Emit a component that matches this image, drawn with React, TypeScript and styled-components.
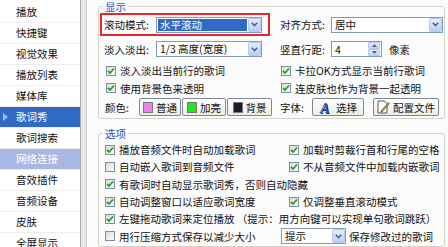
import React from 'react';
import styled, { createGlobalStyle, css } from 'styled-components';

const GlobalStyle = createGlobalStyle`
  html, body {
    margin: 0;
    padding: 0;
    background: #fbfbfb;
  }
  body {
    font-family: "Noto Sans CJK SC", "Noto Sans", sans-serif;
    font-size: 10.5px;
    color: #111;
  }
`;

const Page = styled.div`
  display: flex;
  width: 448px;
  height: 247px;
  overflow: hidden;
  background: #fbfbfb;
`;

const Sidebar = styled.ul`
  margin: 0;
  padding: 2px 0 0;
  list-style: none;
  width: 80px;
  flex: none;
  background: #fff;
  border-right: 1px solid #a9a9a9;
`;

type NavState = 'selected' | 'inactive' | undefined;

const NavItem = styled.li<{ $state?: NavState }>`
  position: relative;
  box-sizing: border-box;
  height: 21px;
  line-height: 20px;
  padding-left: 16px;
  border-bottom: 1px solid #ededed;
  white-space: nowrap;
  ${({ $state }) =>
    $state === 'selected' &&
    css`
      background: #316ac5;
      color: #fff;
      &:before {
        content: '';
        position: absolute;
        left: 3px;
        top: 6px;
        border-left: 5px solid #a9b4f0;
        border-top: 4px solid transparent;
        border-bottom: 4px solid transparent;
      }
    `}
  ${({ $state }) =>
    $state === 'inactive' &&
    css`
      background: #a8b8e2;
      color: #fff;
    `}
`;

const Splitter = styled.div`
  width: 5px;
  flex: none;
  background: #e7e7e7;
  border-right: 1px solid #cacaca;
`;

const Content = styled.div`
  flex: 1;
  min-width: 0;
  padding: 0 3px 0 11px;
`;

const Group = styled.fieldset<{ $gap?: number }>`
  margin: ${({ $gap }) => $gap ?? 0}px 0 0;
  padding: 0 1px 1px;
  border: 1px solid #d3d3c8;
  border-radius: 3px;
  min-width: 0;
`;

const GroupTitle = styled.legend`
  margin-left: 3px;
  padding: 0 2px;
  line-height: 13px;
  color: #2451c2;
`;

const DisplayGrid = styled.div`
  display: grid;
  grid-template-columns: 170px 1fr;
  grid-template-rows: 23px 26px 17px 18px 20px;
  column-gap: 10px;
  align-items: center;
`;

const OptionsGrid = styled.div`
  display: grid;
  grid-template-columns: 171px 1fr;
  grid-auto-rows: 17.3px;
  column-gap: 10px;
  align-items: center;
  padding-top: 1px;
`;

const Field = styled.div<{ $highlight?: boolean; $inset?: number }>`
  display: flex;
  align-items: center;
  box-sizing: border-box;
  min-width: 0;
  white-space: nowrap;
  padding-left: ${({ $inset }) => $inset ?? 0}px;
  ${({ $highlight }) =>
    $highlight &&
    css`
      height: 23px;
      border: 2px solid #e5262b;
      padding-left: 2px;
    `}
`;

const Wide = styled(Field)`
  grid-column: 1 / -1;
`;

const Label = styled.span<{ $w: number }>`
  width: ${({ $w }) => $w}px;
  flex: none;
`;

const SelectBox = styled.div<{ $w?: number }>`
  display: flex;
  align-items: center;
  box-sizing: border-box;
  height: 16px;
  ${({ $w }) => ($w ? `width: ${$w}px; flex: none;` : 'flex: 1;')}
  border: 1px solid #7f9db9;
  background: #fff;
`;

const SelectText = styled.span<{ $active?: boolean }>`
  flex: 1;
  height: 12px;
  line-height: 12px;
  margin: 0 1px;
  padding-left: 2px;
  ${({ $active }) =>
    $active &&
    css`
      background: #316ac5;
      color: #fff;
    `}
`;

const DropButton = styled.span`
  width: 13px;
  height: 14px;
  flex: none;
  box-sizing: border-box;
  display: flex;
  align-items: center;
  justify-content: center;
  border: 1px solid #b7c8f0;
  border-radius: 2px;
  background: linear-gradient(#e6eefc, #b9cdf5);
`;

const Chevron = () => (
  <svg width="7" height="5" viewBox="0 0 7 5">
    <path d="M0.8 0.8 L3.5 3.6 L6.2 0.8" fill="none" stroke="#4d6185" strokeWidth="1.5" />
  </svg>
);

function Select({ value, width, active }: { value: string; width?: number; active?: boolean }) {
  return (
    <SelectBox $w={width}>
      <SelectText $active={active}>{value}</SelectText>
      <DropButton>
        <Chevron />
      </DropButton>
    </SelectBox>
  );
}

const SpinBox = styled.div`
  display: flex;
  align-items: center;
  box-sizing: border-box;
  width: 51px;
  height: 16px;
  border: 1px solid #7f9db9;
  background: #fff;
  padding-left: 3px;
`;

const SpinValue = styled.span`
  flex: 1;
`;

const SpinButtons = styled.span`
  display: flex;
  flex-direction: column;
  width: 12px;
  height: 14px;
  margin-right: 1px;
`;

const SpinPart = styled.span`
  flex: 1;
  display: flex;
  align-items: center;
  justify-content: center;
  border: 1px solid #b7c8f0;
  border-radius: 1px;
  background: linear-gradient(#e6eefc, #c2d3f6);
`;

const Unit = styled.span<{ $gap?: number }>`
  margin-left: ${({ $gap }) => $gap ?? 7}px;
`;

const Check = styled.span`
  width: 10px;
  height: 10px;
  flex: none;
  box-sizing: border-box;
  margin-right: 4px;
  display: flex;
  align-items: center;
  justify-content: center;
  border: 1px solid #7d8fa3;
  background: linear-gradient(135deg, #dedcd6, #fbfbfa);
`;

function CheckItem({ on, label }: { on: boolean; label: string }) {
  return (
    <>
      <Check>
        {on && (
          <svg width="8" height="8" viewBox="0 0 8 8">
            <path d="M1 4 L3 6 L7 1.5" fill="none" stroke="#21a121" strokeWidth="1.8" />
          </svg>
        )}
      </Check>
      <span>{label}</span>
    </>
  );
}

const Button = styled.span<{ $w: number }>`
  display: flex;
  align-items: center;
  justify-content: center;
  gap: 3px;
  box-sizing: border-box;
  width: ${({ $w }) => $w}px;
  height: 18px;
  flex: none;
  border: 1px solid #7a8898;
  border-radius: 2px;
  background: linear-gradient(#ffffff, #ecebe5);
`;

const Swatch = styled.span<{ $c: string }>`
  width: 10px;
  height: 11px;
  background: ${({ $c }) => $c};
  border: 1px solid #777;
  box-sizing: border-box;
`;

const ButtonRow = styled.div<{ $gap: number }>`
  display: flex;
  gap: ${({ $gap }) => $gap}px;
`;

const IconSvg = styled.svg`
  overflow: visible;
  flex: none;
`;

const FontIcon = () => (
  <IconSvg width="14" height="15" viewBox="0 0 14 15">
    <text x="2" y="14" fontFamily="Liberation Serif, serif" fontWeight="bold" fontStyle="italic" fontSize="14" fill="#1d1d3a">A</text>
    <text x="1" y="13" fontFamily="Liberation Serif, serif" fontWeight="bold" fontStyle="italic" fontSize="14" fill="#2c5ad6">A</text>
  </IconSvg>
);

const FileIcon = () => (
  <IconSvg width="13" height="14" viewBox="0 0 13 14">
    <path d="M1 1 H7.5 L10 3.5 V13 H1 Z" fill="#fff" stroke="#555" strokeWidth="1" />
    <path d="M4 11 L11.5 2.5 L12.5 3.5 L5 12 Z" fill="#f0c23a" stroke="#333" strokeWidth="0.7" />
    <path d="M4 11 L3.5 12.5 L5 12 Z" fill="#222" />
  </IconSvg>
);

const navItems: { title: string; state?: NavState }[] = [
  { title: '播放' },
  { title: '快捷键' },
  { title: '视觉效果' },
  { title: '播放列表' },
  { title: '媒体库' },
  { title: '歌词秀', state: 'selected' },
  { title: '歌词搜索' },
  { title: '网络连接', state: 'inactive' },
  { title: '音效插件' },
  { title: '音频设备' },
  { title: '皮肤' },
  { title: '全屏显示' },
];

export default function App() {
  return (
    <Page>
      <GlobalStyle />
      <Sidebar>
        {navItems.map(({ title, state }) => (
          <NavItem key={title} $state={state}>
            {title}
          </NavItem>
        ))}
      </Sidebar>
      <Splitter />
      <Content>
        <Group>
          <GroupTitle>显示</GroupTitle>
          <DisplayGrid>
            <Field $highlight>
              <Label $w={52}>滚动模式:</Label>
              <Select value="水平滚动" width={106} active />
            </Field>
            <Field>
              <Label $w={51}>对齐方式:</Label>
              <Select value="居中" />
            </Field>

            <Field $inset={4}>
              <Label $w={52}>淡入淡出:</Label>
              <Select value="1/3 高度(宽度)" width={106} />
            </Field>
            <Field>
              <Label $w={51}>竖直行距:</Label>
              <SpinBox>
                <SpinValue>4</SpinValue>
                <SpinButtons>
                  <SpinPart>
                    <svg width="5" height="3" viewBox="0 0 5 3">
                      <path d="M0 3 L2.5 0 L5 3 Z" fill="#4d6185" />
                    </svg>
                  </SpinPart>
                  <SpinPart>
                    <svg width="5" height="3" viewBox="0 0 5 3">
                      <path d="M0 0 L2.5 3 L5 0 Z" fill="#4d6185" />
                    </svg>
                  </SpinPart>
                </SpinButtons>
              </SpinBox>
              <Unit>像素</Unit>
            </Field>

            <Field $inset={6}>
              <CheckItem on label="淡入淡出当前行的歌词" />
            </Field>
            <Field $inset={1}>
              <CheckItem on label="卡拉OK方式显示当前行歌词" />
            </Field>

            <Field $inset={6}>
              <CheckItem on label="使用背景色来透明" />
            </Field>
            <Field $inset={1}>
              <CheckItem on label="连皮肤也作为背景一起透明" />
            </Field>

            <Field $inset={5}>
              <Label $w={34}>颜色:</Label>
              <ButtonRow $gap={1}>
                <Button $w={42}>
                  <Swatch $c="#ef7fef" />
                  普通
                </Button>
                <Button $w={44}>
                  <Swatch $c="#1fe61f" />
                  加亮
                </Button>
                <Button $w={45}>
                  <Swatch $c="#1c1c28" />
                  背景
                </Button>
              </ButtonRow>
            </Field>
            <Field>
              <Label $w={32}>字体:</Label>
              <ButtonRow $gap={9}>
                <Button $w={52}>
                  <FontIcon />
                  选择
                </Button>
                <Button $w={66}>
                  <FileIcon />
                  配置文件
                </Button>
              </ButtonRow>
            </Field>
          </DisplayGrid>
        </Group>

        <Group $gap={8}>
          <GroupTitle>选项</GroupTitle>
          <OptionsGrid>
            <Field $inset={5}>
              <CheckItem on label="播放音频文件时自动加载歌词" />
            </Field>
            <Field $inset={8}>
              <CheckItem on label="加载时剪裁行首和行尾的空格" />
            </Field>

            <Field $inset={5}>
              <CheckItem on={false} label="自动嵌入歌词到音频文件" />
            </Field>
            <Field $inset={8}>
              <CheckItem on label="不从音频文件中加载内嵌歌词" />
            </Field>

            <Wide $inset={5}>
              <CheckItem on label="有歌词时自动显示歌词秀，否则自动隐藏" />
            </Wide>

            <Field $inset={5}>
              <CheckItem on label="自动调整窗口以适应歌词宽度" />
            </Field>
            <Field $inset={8}>
              <CheckItem on label="仅调整垂直滚动模式" />
            </Field>

            <Wide $inset={5}>
              <CheckItem on label="左键拖动歌词来定位播放 （提示：用方向键可以实现单句歌词跳跃）" />
            </Wide>

            <Field $inset={5}>
              <CheckItem on={false} label="用行压缩方式保存以减少大小" />
            </Field>
            <Field>
              <Select value="提示" width={65} />
              <Unit $gap={3}>保存修改过的歌词</Unit>
            </Field>
          </OptionsGrid>
        </Group>
      </Content>
    </Page>
  );
}
